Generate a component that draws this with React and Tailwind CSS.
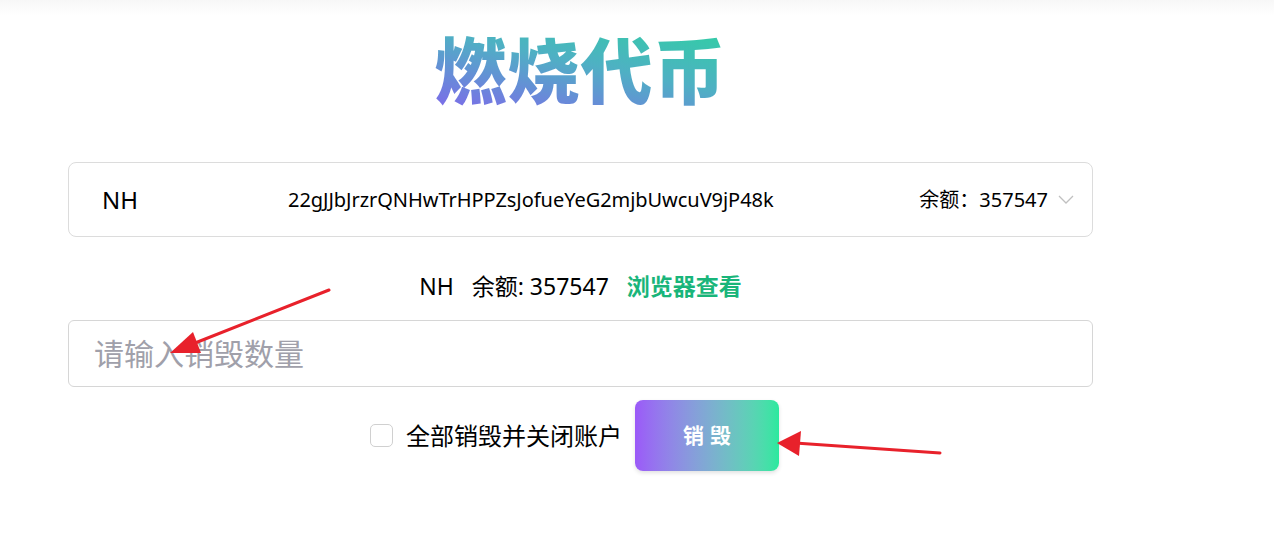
import React, { useState } from "react";

const font = { fontFamily: '"Noto Sans", "Noto Sans CJK SC", sans-serif' };

const Arrows = () => (
  <svg className="pointer-events-none absolute inset-0" width="1274" height="538">
    <line x1="329" y1="290" x2="190" y2="345" stroke="#e8212b" strokeWidth="3" strokeLinecap="round" />
    <polygon points="170,353 193,332 201,353" fill="#e8212b" />
    <line x1="940" y1="453" x2="795" y2="443" stroke="#e8212b" strokeWidth="3" strokeLinecap="round" />
    <polygon points="777,443 801,431 799,456" fill="#e8212b" />
  </svg>
);

export default function App() {
  const [all, setAll] = useState(false);

  return (
    <div className="relative h-[538px] w-[1274px] overflow-hidden bg-white" style={font}>
      <div className="h-[16px] bg-gradient-to-b from-[#f7f7f7] to-white" />
      <div className="ml-[68px] flex w-[1025px] flex-col items-center">
        <h1 className="mt-[11px] bg-[linear-gradient(192deg,#2fd0a2,#4fb0c4_45%,#8066ec)] bg-clip-text text-[72px] font-black leading-[86px] tracking-[1px] text-transparent">
          燃烧代币
        </h1>

        <div className="mt-[49px] flex h-[75px] w-full items-center rounded-lg border border-[#dcdcdc] pl-[33px] pr-[18px] text-black">
          <span className="w-[186px] text-[24px]">NH</span>
          <span className="flex-1 text-[20px] tracking-[-0.05px]">
            22gJJbJrzrQNHwTrHPPZsJofueYeG2mjbUwcuV9jP48k
          </span>
          <span className="text-[20px]">余额：357547</span>
          <svg className="ml-[10px]" width="16" height="10" viewBox="0 0 16 10">
            <path d="M1 1l7 7 7-7" fill="none" stroke="#c0c0c0" strokeWidth="1.3" />
          </svg>
        </div>

        <div className="mt-[33px] flex items-center text-[23px] leading-[32px] text-black">
          <span>NH</span>
          <span className="ml-[18px]">余额: 357547</span>
          <a className="ml-[18px] font-bold text-[#19b57a]">浏览器查看</a>
        </div>

        <input
          className="mt-[18px] h-[67px] w-full rounded-md border border-[#d6d6d6] px-[25px] text-[30px] text-black outline-none placeholder:text-[#a0a0aa]"
          placeholder="请输入销毁数量"
        />

        <div className="mr-[12px] mt-[13px] flex items-center">
          <button
            onClick={() => setAll(!all)}
            className="h-[23px] w-[23px] rounded-[5px] border border-[#d0d0d0] bg-white"
          />
          <span className="ml-[13px] text-[24px] text-black">全部销毁并关闭账户</span>
          <button className="ml-[13px] h-[71px] w-[144px] rounded-lg bg-gradient-to-r from-[#9b59f8] to-[#2ae99e] pl-[6px] text-[21px] font-bold tracking-[6px] text-white shadow-[0_2px_4px_rgba(0,0,0,0.12)]">
            销毁
          </button>
        </div>
      </div>
      <Arrows />
    </div>
  );
}
